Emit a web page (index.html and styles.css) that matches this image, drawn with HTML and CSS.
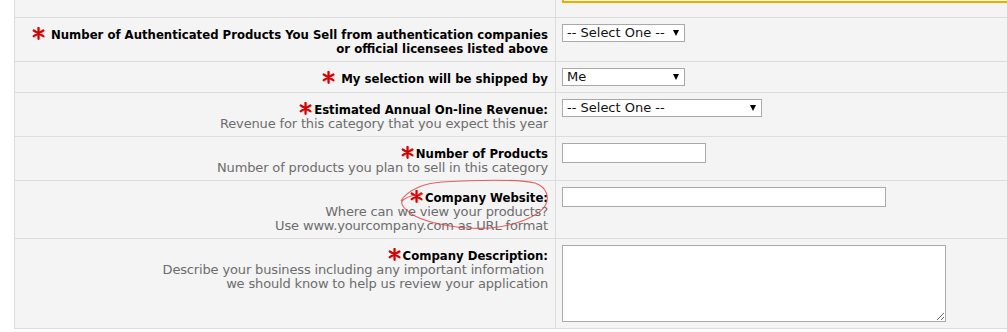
FILE: index.html
```html
<!DOCTYPE html>
<html lang="en">
<head>
    <meta charset="UTF-8">
    <title>Seller Application</title>
    <link rel="stylesheet" href="styles.css">
</head>
<body>

<div class="form">

    <!-- top of the notice box above -->
    <div class="row top">
        <div class="label"></div>
        <div class="field"><div class="notice"></div></div>
    </div>

    <div class="row">
        <div class="label">
            <svg class="req" viewBox="0 0 15 13"><g class="shadow"><path d="M7.5 1.5v11M2.7 4.2l9.6 5.6M12.3 4.2l-9.6 5.6"/></g><g class="star"><path d="M6.5 0.8v11M1.7 3.5l9.6 5.6M11.3 3.5l-9.6 5.6"/></g></svg>
            <b>Number of Authenticated Products You Sell from authentication companies</b><br>
            <b>or official licensees listed above</b>
        </div>
        <div class="field">
            <span class="select-wrap">
                <select class="sel-small">
                    <option>-- Select One --</option>
                </select>
            </span>
        </div>
    </div>

    <div class="row">
        <div class="label">
            <svg class="req" viewBox="0 0 15 13"><g class="shadow"><path d="M7.5 1.5v11M2.7 4.2l9.6 5.6M12.3 4.2l-9.6 5.6"/></g><g class="star"><path d="M6.5 0.8v11M1.7 3.5l9.6 5.6M11.3 3.5l-9.6 5.6"/></g></svg>
            <b>My selection will be shipped by</b>
        </div>
        <div class="field">
            <span class="select-wrap">
                <select class="sel-small">
                    <option>Me</option>
                </select>
            </span>
        </div>
    </div>

    <div class="row">
        <div class="label">
            <svg class="req" viewBox="0 0 15 13"><g class="shadow"><path d="M7.5 1.5v11M2.7 4.2l9.6 5.6M12.3 4.2l-9.6 5.6"/></g><g class="star"><path d="M6.5 0.8v11M1.7 3.5l9.6 5.6M11.3 3.5l-9.6 5.6"/></g></svg><b>Estimated Annual On-line Revenue:</b><br>
            <span class="hint">Revenue for this category that you expect this year</span>
        </div>
        <div class="field">
            <span class="select-wrap">
                <select class="sel-wide">
                    <option>-- Select One --</option>
                </select>
            </span>
        </div>
    </div>

    <div class="row">
        <div class="label">
            <svg class="req" viewBox="0 0 15 13"><g class="shadow"><path d="M7.5 1.5v11M2.7 4.2l9.6 5.6M12.3 4.2l-9.6 5.6"/></g><g class="star"><path d="M6.5 0.8v11M1.7 3.5l9.6 5.6M11.3 3.5l-9.6 5.6"/></g></svg><b>Number of Products</b><br>
            <span class="hint">Number of products you plan to sell in this category</span>
        </div>
        <div class="field">
            <input type="text" class="txt-short">
        </div>
    </div>

    <div class="row">
        <div class="label marked">
            <svg class="req" viewBox="0 0 15 13"><g class="shadow"><path d="M7.5 1.5v11M2.7 4.2l9.6 5.6M12.3 4.2l-9.6 5.6"/></g><g class="star"><path d="M6.5 0.8v11M1.7 3.5l9.6 5.6M11.3 3.5l-9.6 5.6"/></g></svg><b>Company Website:</b><br>
            <span class="hint">Where can we view your products?</span><br>
            <span class="hint">Use www.yourcompany.com as URL format</span>
            <!-- hand drawn mark from the screenshot -->
            <svg class="scribble" viewBox="0 0 160 58" width="160" height="58">
                <path d="M6 25 C12 14 30 7 47 6 C80 4 125 3 140 7 C152 11 155 22 150 30 C144 40 120 50 95 52 C70 54 35 48 20 40 C10 34 4 28 8 24 C14 20 22 18 28 18"/>
            </svg>
        </div>
        <div class="field">
            <input type="text" class="txt-long">
        </div>
    </div>

    <div class="row">
        <div class="label">
            <svg class="req" viewBox="0 0 15 13"><g class="shadow"><path d="M7.5 1.5v11M2.7 4.2l9.6 5.6M12.3 4.2l-9.6 5.6"/></g><g class="star"><path d="M6.5 0.8v11M1.7 3.5l9.6 5.6M11.3 3.5l-9.6 5.6"/></g></svg><b>Company Description:</b><br>
            <span class="hint">Describe your business including any important information&nbsp;</span><br>
            <span class="hint">we should know to help us review your application</span>
        </div>
        <div class="field">
            <textarea class="desc"></textarea>
        </div>
    </div>

</div>

</body>
</html>
```

FILE: styles.css
```css
* {
    margin: 0;
    padding: 0;
    box-sizing: border-box;
}

body {
    font-family: "DejaVu Sans", Verdana, sans-serif;
    font-size: 13px;
    background: #fff;
    overflow: hidden;
}

.form {
    margin-left: 14px;
    border-left: 1px solid #dcdcdc;
    background: #f4f4f4;
}

.row {
    display: grid;
    grid-template-columns: 541px 1fr;
    border-bottom: 1px solid #dcdcdc;
}

.label {
    border-right: 1px solid #dcdcdc;
    text-align: right;
    padding: 10px 7px 5px 0;
    line-height: 14px;
    white-space: nowrap;
}

.label b {
    font-family: "DejaVu Sans Condensed", "DejaVu Sans", sans-serif;
    font-stretch: condensed;
    font-weight: bold;
    color: #000;
}

.hint {
    color: #6d6d6d;
    letter-spacing: -0.15px;
}

.field {
    padding: 6px;
}

.top .label,
.top .field {
    height: 17px;
    padding: 0 0 0 6px;
}

.notice {
    height: 3px;
    border: 2px solid #f2a900;
    border-top: none;
    border-right: none;
    background: #fffbe8;
}

.req {
    width: 15px;
    height: 13px;
    vertical-align: top;
    position: relative;
    top: -1px;
}

.req path {
    fill: none;
    stroke-width: 2.2;
    stroke-linecap: round;
}

.req .shadow path {
    stroke: #b8b8b8;
    opacity: 0.6;
}

.req .star path {
    stroke: #d60000;
}

/* selects */
.select-wrap {
    position: relative;
    display: inline-block;
}

.select-wrap::after {
    content: "";
    position: absolute;
    top: 6px;
    right: 6px;
    border-left: 3px solid transparent;
    border-right: 3px solid transparent;
    border-top: 6px solid #000;
    pointer-events: none;
}

select {
    appearance: none;
    -webkit-appearance: none;
    display: block;
    height: 18px;
    border: 1px solid #a9a9a9;
    background: #fff;
    font-family: "DejaVu Sans", Verdana, sans-serif;
    font-size: 13px;
    line-height: 16px;
    color: #111;
    padding: 0 0 0 4px;
    border-radius: 0;
}

.sel-small {
    width: 123px;
}

.sel-wide {
    width: 200px;
}

input,
textarea {
    display: block;
    border: 1px solid #a9a9a9;
    background: #fff;
    font-family: "DejaVu Sans", Verdana, sans-serif;
    font-size: 13px;
    outline: none;
}

.txt-short {
    width: 144px;
    height: 20px;
}

.txt-long {
    width: 324px;
    height: 20px;
}

.desc {
    width: 384px;
    height: 77px;
}

/* red pen mark around the website label */
.marked {
    position: relative;
}

.scribble {
    position: absolute;
    left: 380px;
    top: -5px;
}

.scribble path {
    fill: none;
    stroke: #e0464a;
    stroke-width: 1.1;
    opacity: 0.85;
}
```
